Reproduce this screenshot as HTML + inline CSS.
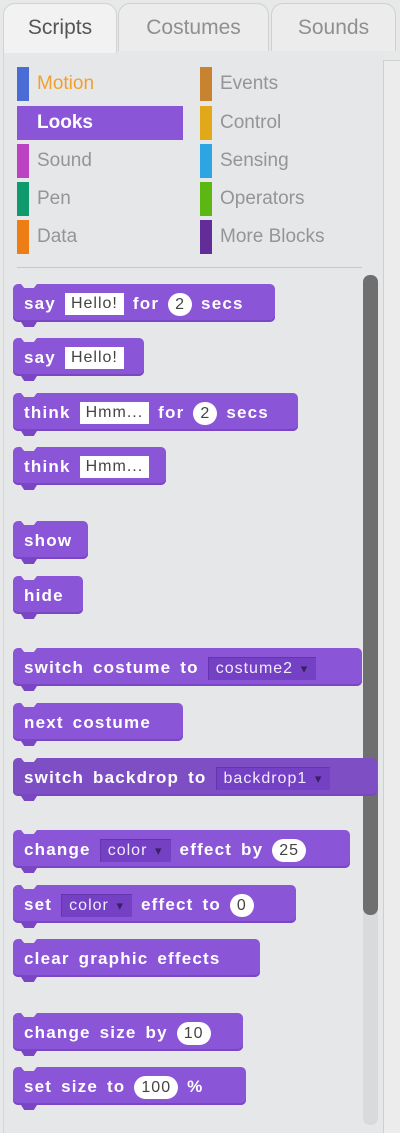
<!DOCTYPE html>
<html><head><style>
*{margin:0;padding:0;box-sizing:border-box}
body{width:400px;height:1133px;background:#e7e8e8;position:relative;overflow:hidden;font-family:"Liberation Sans",sans-serif}
.tab{position:absolute;top:3px;height:48px;border:1px solid #cfd0d1;border-bottom:none;border-radius:12px 12px 0 0;background:#ececec;color:#8f8f8f;font-size:21px;text-align:center;line-height:48px}
.tab.on{background:#f2f2f2;color:#555;height:50px}
.pane{position:absolute;left:3px;top:51px;width:380px;height:1082px;background:#e6e7e8;border-left:1px solid #d6d6d6}
.cat{position:absolute;font-size:19px;color:#959595;height:34px;line-height:34px;padding-left:20px}
.cat i{position:absolute;left:0;top:0;width:12px;height:34px}
.blk{position:absolute;left:13px;height:38px;background:#8a55d7;border-radius:5px;color:#fff;font-weight:bold;font-size:17px;letter-spacing:1.2px;word-spacing:3px;display:flex;align-items:center;padding:2px 0 0 11px;white-space:nowrap;box-shadow:inset 0 -2px 0 #7a46c4;overflow:hidden}
.blk:before{content:"";position:absolute;left:8px;top:0;width:16px;height:4px;background:#e6e7e8;clip-path:polygon(0 0,100% 0,80% 100%,20% 100%)}
.nb{position:absolute;left:21px;width:16px;height:5px;background:#7a46c4;clip-path:polygon(0 0,100% 0,80% 100%,20% 100%)}
.blk span{margin-right:9px}
.tx{background:#fff;color:#444;font-weight:normal;font-size:16px;letter-spacing:1px;padding:1px 6px;height:22px;line-height:20px}
.nm{background:#fff;color:#444;font-weight:normal;font-size:16px;letter-spacing:1px;padding:0 7px;height:23px;line-height:23px;border-radius:12px}
.dd{background:#7440c4;color:#f0eaff;font-weight:normal;font-size:16px;letter-spacing:1px;padding:0 8px;height:23px;line-height:23px;box-shadow:inset 1px 1px 0 #6535b0}
.dd:after{content:" ▾";color:#3b2065;font-size:13px}
</style></head><body>
<div class="tab" style="left:118px;width:151px">Costumes</div>
<div class="tab" style="left:271px;width:125px">Sounds</div>
<div class="pane"></div>
<div class="tab on" style="left:3px;width:114px;border-color:#d2d2d2">Scripts</div>
<div style="position:absolute;left:383px;top:60px;width:17px;height:1073px;background:#ececec;border-left:1px solid #cfcfcf;border-top:1px solid #cfcfcf"></div>

<div class="cat" style="left:17px;top:67px;color:#f0a030"><i style="background:#4a6cd4"></i>Motion</div>
<div style="position:absolute;left:17px;top:106px;width:166px;height:34px;background:#8a55d7"></div>
<div class="cat" style="left:17px;top:106px;color:#fff;font-weight:bold"><i style="background:#8a55d7"></i>Looks</div>
<div class="cat" style="left:17px;top:144px"><i style="background:#bb42c3"></i>Sound</div>
<div class="cat" style="left:17px;top:182px"><i style="background:#0e9a6c"></i>Pen</div>
<div class="cat" style="left:17px;top:220px"><i style="background:#ee7d16"></i>Data</div>
<div class="cat" style="left:200px;top:67px"><i style="background:#c88330"></i>Events</div>
<div class="cat" style="left:200px;top:106px"><i style="background:#e1a91a"></i>Control</div>
<div class="cat" style="left:200px;top:144px"><i style="background:#2ca5e2"></i>Sensing</div>
<div class="cat" style="left:200px;top:182px"><i style="background:#5cb712"></i>Operators</div>
<div class="cat" style="left:200px;top:220px"><i style="background:#632d99"></i>More Blocks</div>
<div style="position:absolute;left:17px;top:267px;width:345px;height:1px;background:#c8c8c8"></div>

<div style="position:absolute;left:363px;top:275px;width:15px;height:850px;background:#d9dadb;border-radius:7px"></div>
<div style="position:absolute;left:363px;top:275px;width:15px;height:640px;background:#6f6f70;border-radius:7px"></div>

<div class="blk" style="top:284px;width:262px"><span>say</span><span class="tx">Hello!</span><span>for</span><span class="nm">2</span><span>secs</span></div><div class="nb" style="top:322px"></div>
<div class="blk" style="top:338px;width:131px"><span>say</span><span class="tx">Hello!</span></div><div class="nb" style="top:376px"></div>
<div class="blk" style="top:393px;width:285px"><span>think</span><span class="tx">Hmm...</span><span>for</span><span class="nm">2</span><span>secs</span></div><div class="nb" style="top:431px"></div>
<div class="blk" style="top:447px;width:153px"><span>think</span><span class="tx">Hmm...</span></div><div class="nb" style="top:485px"></div>
<div class="blk" style="top:521px;width:75px"><span>show</span></div><div class="nb" style="top:559px"></div>
<div class="blk" style="top:576px;width:70px"><span>hide</span></div><div class="nb" style="top:614px"></div>
<div class="blk" style="top:648px;width:349px"><span>switch costume to</span><span class="dd">costume2</span></div><div class="nb" style="top:686px"></div>
<div class="blk" style="top:703px;width:170px"><span>next costume</span></div><div class="nb" style="top:741px"></div>
<div class="blk" style="top:758px;width:364px;background:#7d4ec4"><span>switch backdrop to</span><span class="dd">backdrop1</span></div><div class="nb" style="top:796px"></div>
<div class="blk" style="top:830px;width:337px"><span>change</span><span class="dd">color</span><span>effect by</span><span class="nm">25</span></div><div class="nb" style="top:868px"></div>
<div class="blk" style="top:885px;width:283px"><span>set</span><span class="dd">color</span><span>effect to</span><span class="nm">0</span></div><div class="nb" style="top:923px"></div>
<div class="blk" style="top:939px;width:247px"><span>clear graphic effects</span></div><div class="nb" style="top:977px"></div>
<div class="blk" style="top:1013px;width:230px"><span>change size by</span><span class="nm">10</span></div><div class="nb" style="top:1051px"></div>
<div class="blk" style="top:1067px;width:233px"><span>set size to</span><span class="nm">100</span><span>%</span></div><div class="nb" style="top:1105px"></div>
</body></html>
